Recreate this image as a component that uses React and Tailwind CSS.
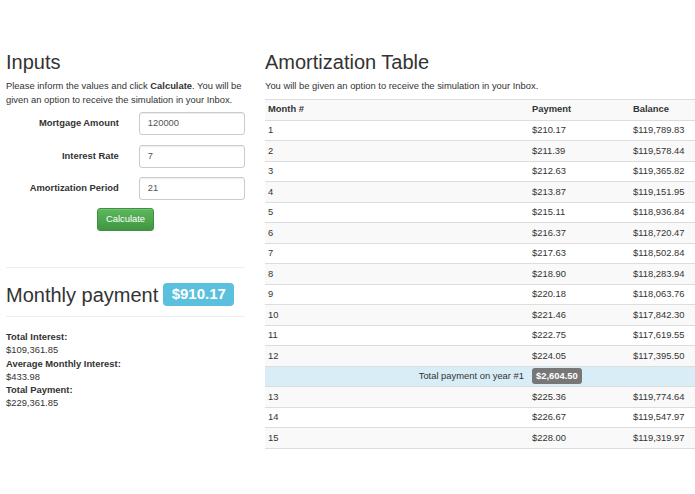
import React from "react";

const rows = [
  [1, "$210.17", "$119,789.83"],
  [2, "$211.39", "$119,578.44"],
  [3, "$212.63", "$119,365.82"],
  [4, "$213.87", "$119,151.95"],
  [5, "$215.11", "$118,936.84"],
  [6, "$216.37", "$118,720.47"],
  [7, "$217.63", "$118,502.84"],
  [8, "$218.90", "$118,283.94"],
  [9, "$220.18", "$118,063.76"],
  [10, "$221.46", "$117,842.30"],
  [11, "$222.75", "$117,619.55"],
  [12, "$224.05", "$117,395.50"],
];
const rows2 = [
  [13, "$225.36", "$119,774.64"],
  [14, "$226.67", "$119,547.97"],
  [15, "$228.00", "$119,319.97"],
];

function Field({ label, value }) {
  return (
    <div className="flex items-center h-[23px]">
      <div className="w-[116px] text-right font-bold text-[9.4px] text-[#333]">{label}</div>
      <div className="ml-[20px] w-[109px] h-[23px] border border-[#ccc] rounded-[3px] bg-white flex items-center pl-[8px] text-[9.4px] text-[#555] shadow-[inset_0_1px_1px_rgba(0,0,0,0.075)]">
        {value}
      </div>
    </div>
  );
}

function Row({ r, gray }) {
  return (
    <div className={`flex h-[20.5px] items-center border-t border-[#ddd] text-[9.4px] text-[#333] ${gray ? "bg-[#f9f9f9]" : "bg-white"}`}>
      <div className="w-[263px] pl-[3px]">{r[0]}</div>
      <div className="w-[101px] pl-[4px]">{r[1]}</div>
      <div className="flex-1 pl-[4px]">{r[2]}</div>
    </div>
  );
}

export default function App() {
  return (
    <div className="w-[695px] h-[494px] bg-white overflow-hidden flex font-['Liberation_Sans',Arial,sans-serif] text-[#333]">
      <div className="w-[239px] ml-[6px] flex flex-col">
        <h3 className="text-[20px] leading-[22px] mt-[51px] font-normal">Inputs</h3>
        <p className="text-[9.4px] leading-[13.5px] mt-[6px]">
          Please inform the values and click <b>Calculate</b>. You will be given an option to receive the simulation in your Inbox.
        </p>
        <div className="flex flex-col gap-[9.5px] mt-[6px]">
          <Field label="Mortgage Amount" value="120000" />
          <Field label="Interest Rate" value="7" />
          <Field label="Amortization Period" value="21" />
        </div>
        <div className="mt-[8px] ml-[91px]">
          <div className="w-[57px] h-[23px] rounded-[3px] border border-[#3e8f3e] bg-gradient-to-b from-[#5cb85c] to-[#419641] text-white text-[9.4px] flex items-center justify-center shadow-[inset_0_1px_0_rgba(255,255,255,0.15)]">
            Calculate
          </div>
        </div>
        <div className="mt-[36px] border-t border-[#eee]" />
        <div className="flex items-center mt-[15px] h-[23px]">
          <span className="text-[20px] leading-[22px]">Monthly payment</span>
          <span className="ml-[5px] h-[23px] w-[71px] rounded-[4px] bg-[#5bc0de] text-white font-bold text-[15px] flex items-center justify-center">
            $910.17
          </span>
        </div>
        <div className="mt-[10px] border-t border-[#eee]" />
        <div className="mt-[13px] text-[9.4px] leading-[13.3px]">
          <div className="font-bold">Total Interest:</div>
          <div>$109,361.85</div>
          <div className="font-bold">Average Monthly Interest:</div>
          <div>$433.98</div>
          <div className="font-bold">Total Payment:</div>
          <div>$229,361.85</div>
        </div>
      </div>
      <div className="ml-[20px] w-[430px] flex flex-col">
        <h3 className="text-[20px] leading-[22px] mt-[51px] font-normal">Amortization Table</h3>
        <p className="text-[9.4px] leading-[13.5px] mt-[6px]">You will be given an option to receive the simulation in your Inbox.</p>
        <div className="mt-[6px]">
          <div className="flex h-[21px] items-center border-t border-[#ddd] bg-[#f9f9f9] text-[9.4px] font-bold">
            <div className="w-[263px] pl-[3px]">Month #</div>
            <div className="w-[101px] pl-[4px]">Payment</div>
            <div className="flex-1 pl-[4px]">Balance</div>
          </div>
          {rows.map((r, i) => (
            <Row key={r[0]} r={r} gray={i % 2 === 1} />
          ))}
          <div className="flex h-[20.5px] items-center border-t border-[#ddd] bg-[#d9edf7] text-[9.4px]">
            <div className="w-[263px] text-right pr-[4px]">Total payment on year #1</div>
            <div className="w-[101px] pl-[4px]">
              <span className="inline-flex items-center h-[16px] px-[4px] rounded-[3px] bg-[#777] text-white font-bold text-[9.4px]">$2,604.50</span>
            </div>
            <div className="flex-1" />
          </div>
          {rows2.map((r, i) => (
            <Row key={r[0]} r={r} gray={i % 2 === 0} />
          ))}
          <div className="border-t border-[#ddd]" />
        </div>
      </div>
    </div>
  );
}
